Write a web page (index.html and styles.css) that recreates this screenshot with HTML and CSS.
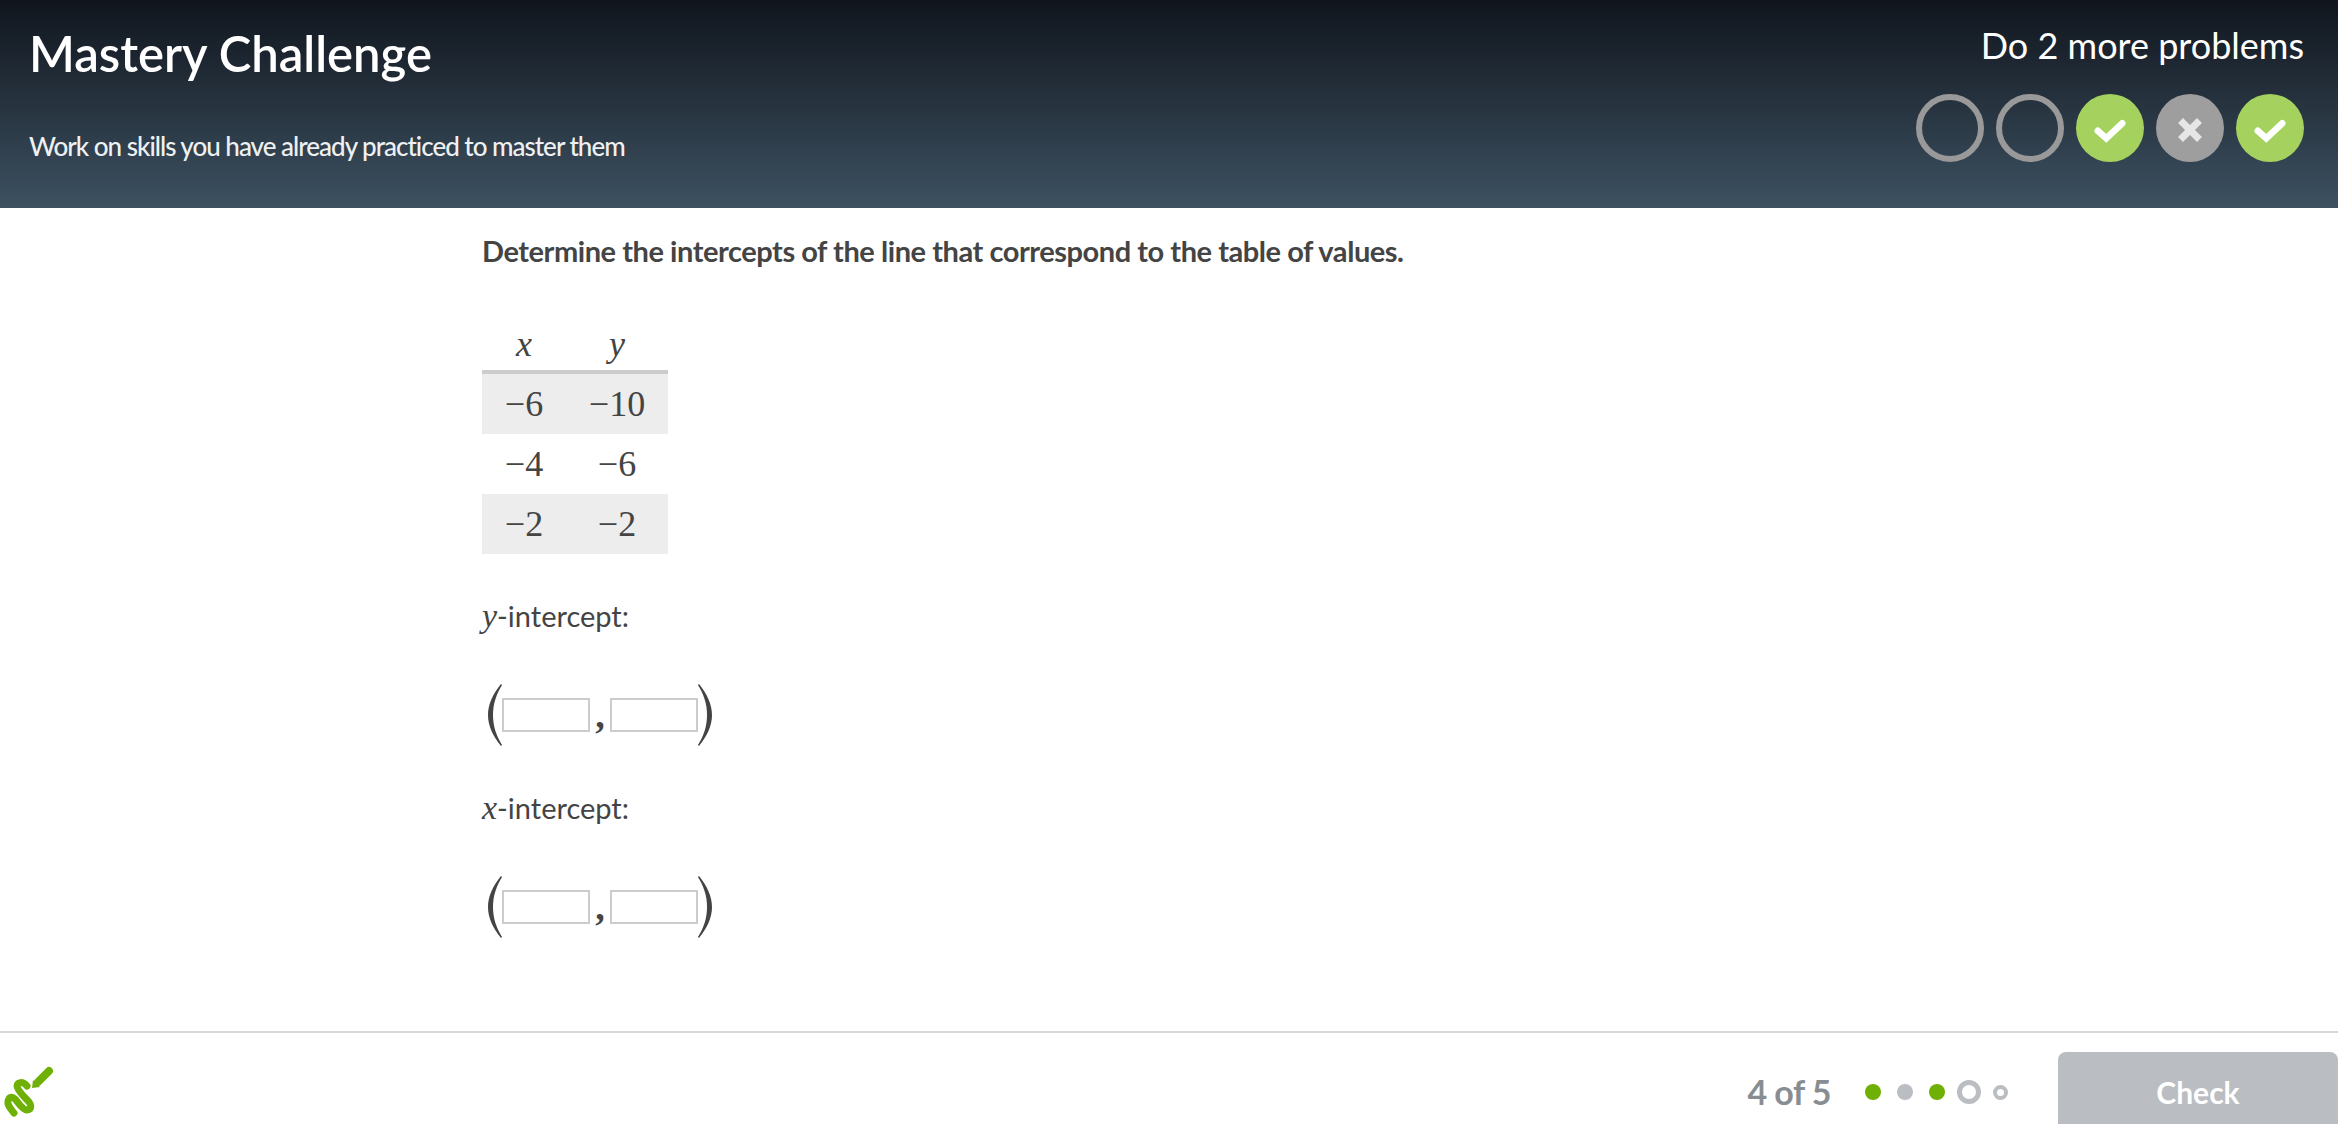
FILE: index.html
```html
<!DOCTYPE html>
<html lang="en">
<head>
    <meta charset="UTF-8">
    <title>Mastery Challenge</title>
    <link rel="stylesheet" href="styles.css">
</head>
<body>
    <div class="page">
        <div class="header">
            <div class="header-left">
                <h1>Mastery Challenge</h1>
                <p>Work on skills you have already practiced to master them</p>
            </div>
            <div class="header-right">
                <div class="remaining">Do 2 more problems</div>
                <div class="badges">
                    <div class="badge badge-empty"></div>
                    <div class="badge badge-empty"></div>
                    <div class="badge badge-right">
                        <svg viewBox="0 0 34 34" width="32" height="32"><path d="M4 20l9 8L30 12" fill="none" stroke="#fff" stroke-width="7" stroke-linecap="round"/></svg>
                    </div>
                    <div class="badge badge-wrong">
                        <svg viewBox="0 0 26 30" width="26" height="30"><path d="M6 10l14 14M20 10L6 24" fill="none" stroke="#e6e6e6" stroke-width="7" stroke-linecap="square"/></svg>
                    </div>
                    <div class="badge badge-right">
                        <svg viewBox="0 0 34 34" width="32" height="32"><path d="M4 20l9 8L30 12" fill="none" stroke="#fff" stroke-width="7" stroke-linecap="round"/></svg>
                    </div>
                </div>
            </div>
        </div>

        <div class="content">
            <p class="question">Determine the intercepts of the line that correspond to the table of values.</p>

            <table class="values">
                <thead>
                    <tr><th><span class="var">x</span></th><th><span class="var">y</span></th></tr>
                </thead>
                <tbody>
                    <tr><td>−6</td><td>−10</td></tr>
                    <tr><td>−4</td><td>−6</td></tr>
                    <tr><td>−2</td><td>−2</td></tr>
                </tbody>
            </table>

            <p class="label label-y"><span class="var">y</span>-intercept:</p>
            <div class="point">
                <svg class="paren" viewBox="0 0 16 62" width="16" height="62"><path d="M15 0C7 10 2 20 2 31s5 21 13 31l1-1C10 51 7 42 7 31s3-20 9-30z" fill="#444"/></svg>
                <input class="blank" type="text">
                <span class="comma">,</span>
                <input class="blank" type="text">
                <svg class="paren" viewBox="0 0 16 62" width="16" height="62"><path d="M1 0c8 10 13 20 13 31S9 52 1 62L0 61c6-10 9-19 9-30S6 11 0 1z" fill="#444"/></svg>
            </div>

            <p class="label label-x"><span class="var">x</span>-intercept:</p>
            <div class="point">
                <svg class="paren" viewBox="0 0 16 62" width="16" height="62"><path d="M15 0C7 10 2 20 2 31s5 21 13 31l1-1C10 51 7 42 7 31s3-20 9-30z" fill="#444"/></svg>
                <input class="blank" type="text">
                <span class="comma">,</span>
                <input class="blank" type="text">
                <svg class="paren" viewBox="0 0 16 62" width="16" height="62"><path d="M1 0c8 10 13 20 13 31S9 52 1 62L0 61c6-10 9-19 9-30S6 11 0 1z" fill="#444"/></svg>
            </div>
        </div>

        <div class="footer">
            <svg class="logo" viewBox="0 0 60 60" width="60" height="60">
                <path d="M14 49C10 44 7 41 8 37c1-4 4-5 7-2 3 3 7 11 12 11 4 0 5-4 2-8-4-5-11-10-12-16 0-4 6-5 10 0" fill="none" stroke="#6eb005" stroke-width="7" stroke-linecap="round"/>
                <path d="M38 18L49 7" fill="none" stroke="#6eb005" stroke-width="8" stroke-linecap="round"/>
                <path d="M32 24l1-8 7 7z" fill="#6eb005"/>
            </svg>
            <div class="footer-right">
                <span class="count">4 of 5</span>
                <div class="dots">
                    <span class="dot dot-right"></span>
                    <span class="dot dot-wrong"></span>
                    <span class="dot dot-right"></span>
                    <span class="dot-current"></span>
                    <span class="dot-next"></span>
                </div>
                <button class="check">Check</button>
            </div>
        </div>
    </div>
</body>
</html>
```

FILE: styles.css
```css
body {
    margin: 0;
    font-family: Lato, Arial, sans-serif;
    color: #444;
    background-color: #fff;
}

.page {
    display: flex;
    flex-direction: column;
    height: 1124px;
    overflow: hidden;
}

.header {
    display: flex;
    justify-content: space-between;
    height: 208px;
    flex-shrink: 0;
    padding: 0 34px 0 29px;
    box-sizing: border-box;
    background: linear-gradient(to bottom, #10151d, #3d5161);
    color: #fff;
}

.header h1 {
    margin: 23px 0 0;
    font-size: 49px;
    line-height: 60px;
    font-weight: 600;
}

.header p {
    margin: 48px 0 0;
    font-size: 26px;
    line-height: 30px;
    letter-spacing: -1px;
    font-weight: 500;
    color: #eef0f2;
}

.header-right {
    display: flex;
    flex-direction: column;
    align-items: flex-end;
}

.remaining {
    margin-top: 23px;
    font-size: 36px;
    line-height: 44px;
    font-weight: 400;
}

.badges {
    display: flex;
    gap: 12px;
    margin-top: 27px;
}

.badge {
    display: flex;
    align-items: center;
    justify-content: center;
    width: 68px;
    height: 68px;
    box-sizing: border-box;
    border-radius: 50%;
}

.badge-empty {
    border: 6px solid #999;
}

.badge-right {
    background-color: #a5d25f;
}

.badge-wrong {
    background-color: #9e9e9e;
}

.content {
    flex: 1;
    padding-left: 482px;
}

.question {
    margin: 0;
    padding-top: 25px;
    font-size: 29px;
    line-height: 36px;
    font-weight: 700;
    letter-spacing: -0.45px;
}

.values {
    margin-top: 49px;
    border-collapse: collapse;
    font-family: "Liberation Serif", serif;
    font-size: 36px;
}

.values th {
    height: 52px;
    padding: 0;
    font-weight: 400;
    border-bottom: 4px solid #ccc;
}

.values td {
    height: 60px;
    padding: 0;
    text-align: center;
}

.values th:first-child,
.values td:first-child {
    width: 84px;
}

.values th:last-child,
.values td:last-child {
    width: 102px;
}

.values tbody tr:nth-child(odd) {
    background-color: #ededed;
}

.var {
    font-family: "Liberation Serif", serif;
    font-style: italic;
}

.label {
    margin: 0;
    font-size: 29px;
    line-height: 36px;
}

.label .var {
    font-size: 34px;
}

.label-y {
    margin-top: 44px;
}

.label-x {
    margin-top: 44px;
}

.point {
    display: flex;
    align-items: center;
    height: 62px;
    margin-top: 50px;
    padding-left: 4px;
}

.paren {
    flex-shrink: 0;
}

.blank {
    width: 88px;
    height: 34px;
    box-sizing: border-box;
    margin: 0;
    padding: 0;
    border: 2px solid #ccc;
    background-color: #fff;
}

.comma {
    width: 20px;
    text-align: center;
    font-family: "Liberation Serif", serif;
    font-size: 38px;
    font-weight: 700;
    line-height: 62px;
}

.footer {
    display: flex;
    justify-content: space-between;
    height: 93px;
    flex-shrink: 0;
    box-sizing: border-box;
    border-top: 2px solid #d8d8d8;
}

.logo {
    margin-top: 31px;
}

.footer-right {
    display: flex;
    align-items: flex-start;
}

.count {
    margin-top: 41px;
    margin-right: 34px;
    font-size: 34px;
    line-height: 36px;
    font-weight: 700;
    letter-spacing: -0.5px;
    color: #888d92;
}

.dots {
    display: flex;
    align-items: center;
    height: 24px;
    margin-top: 47px;
    margin-right: 50px;
}

.dot {
    width: 16px;
    height: 16px;
    margin-right: 16px;
    border-radius: 50%;
}

.dot-right {
    background-color: #6eb005;
}

.dot-wrong {
    background-color: #babec2;
}

.dot-current {
    width: 24px;
    height: 24px;
    box-sizing: border-box;
    margin-left: -4px;
    margin-right: 12px;
    border: 5px solid #babec2;
    border-radius: 50%;
}

.dot-next {
    width: 15px;
    height: 15px;
    box-sizing: border-box;
    border: 4px solid #babec2;
    border-radius: 50%;
}

.check {
    width: 280px;
    height: 72px;
    margin-top: 19px;
    padding: 8px 0 0;
    border: none;
    border-radius: 8px 8px 0 0;
    background-color: #babdc1;
    color: #fff;
    font-family: Lato, Arial, sans-serif;
    font-size: 30px;
    font-weight: 700;
}
```
